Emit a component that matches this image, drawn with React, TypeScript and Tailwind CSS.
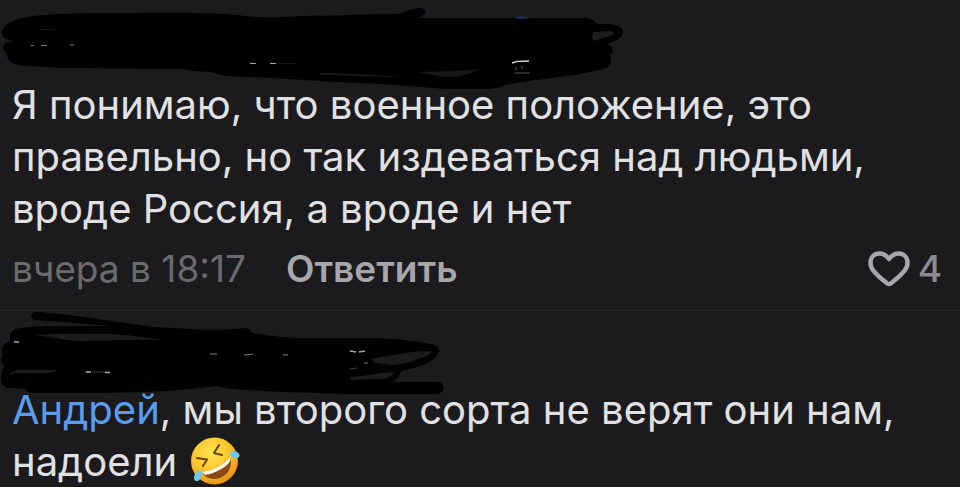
import type { ReactNode } from 'react'

function TopScribble() {
  return (
    <svg className="pointer-events-none block overflow-visible" width="640" height="79" viewBox="0 0 640 79" aria-hidden="true">
      <path
        d="M2 33C2 25 14 18 34 16C60 13 90 13 120 13C160 13 205 12 235 15C250 17 270 18 285 17C320 15 360 15 397 14C405 12 412 8 420 8C427 9 427 14 422 16L417 18L585 18C591 18 595 21 597 24L607 24C618 24 624 28 623 33C622 38 614 42 607 44C612 45 614 49 612 53C608 56 611 57 611 61C611 67 606 69 600 70L575 75C550 78 525 81 505 85C497 89 491 89 484 89L446 89C420 87 400 85 380 84L320 81C290 79 250 77 225 76C215 75 220 73 210 72C200 71 190 71 184 69L66 68C45 67 30 66 20 65C10 64 7 60 7 53C2 51 2 45 6 43L14 41C6 40 2 38 2 33Z"
        fill="#000"
      />
      <path d="M417 72C440 71 460 71 480 69C472 73 462 76 452 77C440 77 428 74 417 72Z" fill="#161618" />
      <path d="M320 73C350 73 380 75 402 77C375 77 350 76 320 75Z" fill="#151517" />
      <path d="M594 41L612 35C615 33 613 31 608 31L593 32L592 37Z" fill="#1b1b1d" />
      <path d="M514 18.500Q522 15 530 18.500Z" fill="#223c7c" />
      <path d="M31 45.500h3M41 45.500h6M70 45h4" stroke="#77736c" strokeWidth="1" />
      <path d="M250 63.500h6M270 63.500h6" stroke="#aaa69f" strokeWidth="1" />
      <path d="M278 63.500h18M40 29.500h15" stroke="#161616" strokeWidth="1" />
      <path d="M512 63L517 61.500L529 61" stroke="#d5cec4" strokeWidth="1.500" fill="none" />
      <path d="M514 73h16M516 67v3M522 66v3" stroke="#5c5148" strokeWidth="1" />
    </svg>
  )
}

function ReplyScribble() {
  return (
    <svg className="pointer-events-none block overflow-visible" width="460" height="73" viewBox="0 311 460 73" aria-hidden="true">
      <path
        d="M35 312C43 312 55 314 69 315L112 321L154 327L190 329C215 331 235 329 246 328C251 329 250 332 253 333C267 335 280 337 298 338L374 338C400 339 420 342 431 344C439 346 441 350 438 354C434 362 417 368 401 371C400 376 397 380 392 382L438 382C446 383 445 393 437 394L350 394C310 393 275 392 250 390C235 389 225 389 217 386L190 389C160 392 120 393 85 393L35 393C26 393 26 390 25 389L9 388C2 387 1 382 1 377C1 372 3 368 5 366C0 364 0 358 3 356C0 350 2 343 11 341C8 337 10 331 16 329C32 325 60 327 87 326L111 326L51 321L35 320C30 319 30 313 35 312Z"
        fill="#000"
      />
      <path d="M33 335C60 333 86 334 110 334C130 335 150 338 164 340C130 339 100 341 77 341C62 340 48 336 33 335Z" fill="#1b1b1d" />
      <path d="M9 375C11 371 15 370 22 370L58 370L50 373L15 373Z" fill="#1b1b1d" />
      <path d="M370 359C388 356 410 351 429 351C434 352 430 355 424 357C413 361 403 365 392 365L375 363Z" fill="#1b1b1d" />
      <path d="M350 377C365 376 377 373 393 372C396 373 389 379 381 379L351 380Z" fill="#1b1b1d" />
      <path d="M14 342h5M86 372h5M105 372.500h5" stroke="#b0aca4" strokeWidth="1.500" />
      <path d="M92 372h13M349 369l8-1" stroke="#3b3934" strokeWidth="1" />
      <path d="M210 354h7M244 355l9-1M283 355h5M364 363h4" stroke="#807c74" strokeWidth="1" />
      <path d="M350 351l6 1M359 352l6-1" stroke="#aca69e" strokeWidth="1.500" />
    </svg>
  )
}

function HeartIcon() {
  return (
    <svg width="42" height="36" viewBox="0 0 42 36" fill="none" aria-hidden="true">
      <path
        d="M21 8C18.500 4.500 15.500 2.500 11.500 2.500C6 2.500 2.500 6.500 2.500 12C2.500 16 4.500 19 7.500 22C11 26 15 29 19 32.300Q21 33.800 23 32.300C27 29 31 26 34.500 22C37.500 19 39.500 16 39.500 12C39.500 6.500 36 2.500 30.500 2.500C26.500 2.500 23.500 4.500 21 8Z"
        stroke="#a7a7ab"
        strokeWidth="4.500"
        strokeLinejoin="round"
      />
    </svg>
  )
}

function RoflEmoji() {
  return (
    <svg className="ml-0.5 inline-block align-[-9px]" width="50" height="48" viewBox="0 0 50 48" role="img" aria-label="Смеётся до слёз">
      <defs>
        <radialGradient id="face" cx="42%" cy="35%" r="65%">
          <stop offset="0" stopColor="#ffe44e" />
          <stop offset="0.6" stopColor="#fdc62f" />
          <stop offset="1" stopColor="#e9921b" />
        </radialGradient>
      </defs>
      <circle cx="24.500" cy="24" r="23.500" fill="url(#face)" />
      <path d="M7 21L17 22.500L13 29M29 8L24 16L32 18" stroke="#70400c" strokeWidth="2" fill="none" strokeLinecap="round" strokeLinejoin="round" />
      <path d="M12 35C24 33 34 28 40 20C43 28 39 38 30 41C23 43 15 42 12 35Z" fill="#8a4a16" />
      <path d="M12 35C24 33 34 28 40 20C41 22 40 24 39 26C33 32 25 36 15 38Z" fill="#fff8ed" />
      <path d="M40 18C39 15 43 13 47 15C51 17 50 21 46 21C43 21 41 20 40 18Z" fill="#6cc8ee" />
      <path d="M11 33C7 34 4 37 4 41C4 45 9 45 10 42C12 39 12 36 11 33Z" fill="#6cc8ee" />
    </svg>
  )
}

function CommentText({ children }: { children: ReactNode }) {
  return <p className="px-3 text-[40px] leading-[52px] text-[#e1e1e4]">{children}</p>
}

export default function App() {
  return (
    <main className="min-h-screen bg-[#1b1b1d] font-['Inter','Noto_Sans',sans-serif]">
      <article className="border-b border-[#2c2c2e]">
        <header className="relative z-10">
          <TopScribble />
        </header>
        <CommentText>
          Я понимаю, что военное положение, это правельно, но так издеваться над людьми, вроде Россия, а вроде и нет
        </CommentText>
        <footer className="flex items-center px-3 pt-2 pb-4 text-[37px] leading-[51px]">
          <time className="text-[#6b6b6e]">вчера в 18:17</time>
          <button type="button" className="ml-10 font-semibold text-[#a7a7ab]">
            Ответить
          </button>
          <button type="button" aria-label="Нравится: 4" className="mr-1.5 ml-auto flex items-center gap-2 font-medium text-[#8b8b8f]">
            <HeartIcon />
            <span>4</span>
          </button>
        </footer>
      </article>

      <article>
        <header className="relative z-10">
          <ReplyScribble />
        </header>
        <CommentText>
          <a href="#andrey" className="text-[#5a9bee]">Андрей</a>, мы второго сорта не верят они нам, надоели <RoflEmoji />
        </CommentText>
      </article>
    </main>
  )
}
